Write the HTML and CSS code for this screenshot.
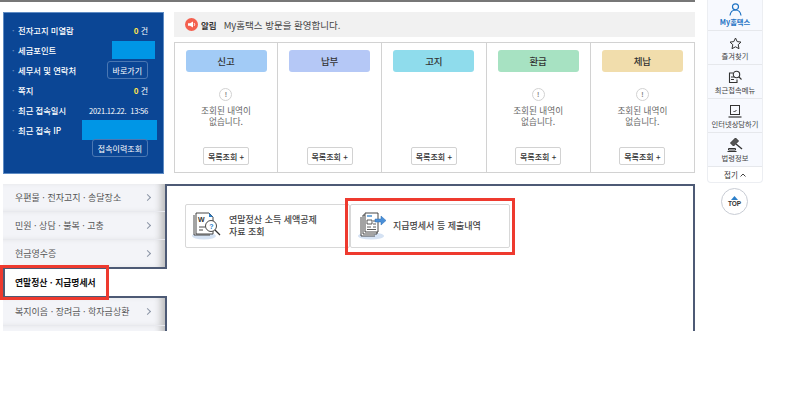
FILE: index.html
```html
<!DOCTYPE html>
<html lang="ko">
<head>
<meta charset="utf-8">
<title>My홈택스</title>
<link rel="stylesheet" href="styles.css">
</head>
<body>
<div class="page">
  <div class="main">
    <div class="topline"></div>
    <div class="top">
      <section class="info">
        <div class="info-row"><span class="lab">전자고지 미열람</span><span class="val"><b>0</b> 건</span></div>
        <div class="info-row"><span class="lab">세금포인트</span><span class="mask m1"></span></div>
        <div class="info-row"><span class="lab">세무서 및 연락처</span><span class="dbtn">바로가기</span></div>
        <div class="info-row"><span class="lab">쪽지</span><span class="val"><b>0</b> 건</span></div>
        <div class="info-row"><span class="lab">최근 접속일시</span><span class="date">2021.12.22.&nbsp; 13:56</span></div>
        <div class="info-row"><span class="lab">최근 접속 IP</span><span class="mask m2"></span></div>
        <div class="info-last"><span class="dbtn">접속이력조회</span></div>
      </section>
      <div class="right">
        <div class="notice">
          <svg class="spk" width="13" height="13" viewBox="0 0 13 13"><circle cx="6.500" cy="6.500" r="6.500" fill="#f4604f"/><path d="M3 5.200h2L8 3.600v5.800L5 7.800H3z" fill="#fff"/><path d="M9.200 5.200q1 1.300 0 2.600" stroke="#fff" fill="none"/></svg>
          <b>알림</b><span>My홈택스 방문을 환영합니다.</span>
        </div>
        <div class="cols">
          <div class="col"><div class="chip c1">신고</div><div class="empty"><i>!</i><p>조회된 내역이<br>없습니다.</p></div><span class="more">목록조회 +</span></div>
          <div class="col"><div class="chip c2">납부</div><div class="empty"></div><span class="more">목록조회 +</span></div>
          <div class="col"><div class="chip c3">고지</div><div class="empty"></div><span class="more">목록조회 +</span></div>
          <div class="col"><div class="chip c4">환급</div><div class="empty"><i>!</i><p>조회된 내역이<br>없습니다.</p></div><span class="more">목록조회 +</span></div>
          <div class="col"><div class="chip c5">체납</div><div class="empty"><i>!</i><p>조회된 내역이<br>없습니다.</p></div><span class="more">목록조회 +</span></div>
        </div>
      </div>
    </div>
    <div class="bottom">
      <nav class="menu">
        <a class="mi">우편물 · 전자고지 · 송달장소<em></em></a>
        <a class="mi">민원 · 상담 · 불복 · 고충<em></em></a>
        <a class="mi mi-c">현금영수증<em></em></a>
        <a class="mi-on">연말정산 · 지급명세서<span class="red red-tab"></span></a>
        <a class="mi mi-n">복지이음 · 장려금 · 학자금상환<em></em></a>
        <a class="mi"></a>
      </nav>
      <div class="panel">
        <div class="cards">
          <div class="card c-a">
            <svg class="cico" width="30" height="28" viewBox="0 0 30 28"><ellipse cx="12" cy="24" rx="12" ry="3.500" fill="#d5e2f3"/><path d="M2 3v20h16" fill="#fff" stroke="#333" stroke-width=".9"/><path d="M4 1h13l4 4v17H4z" fill="#fff" stroke="#333" stroke-width=".9"/><path d="M17 1l4 4h-4z" fill="#2c7fc9"/><text x="6" y="10" font-size="7" font-weight="700" fill="#333" font-family="Liberation Sans">W</text><path d="M7 15h6M7 18h4" stroke="#333" stroke-width=".9"/><circle cx="19" cy="14" r="5.500" fill="#fff" stroke="#333" stroke-width=".9"/><text x="17.300" y="17" font-size="7" font-weight="700" fill="#2c7fc9" font-family="Liberation Sans">?</text><path d="M23 18l5 5" stroke="#333" stroke-width="1.300"/></svg>
            <span>연말정산 소득 세액공제<br>자료 조회</span>
          </div>
          <div class="card c-b">
            <svg class="cico" width="29" height="28" viewBox="0 0 29 28"><ellipse cx="13" cy="24" rx="13" ry="3.500" fill="#d5e2f3"/><path d="M3 5v19h14" fill="#fff" stroke="#333" stroke-width=".9"/><path d="M5 3v19h14V3z" fill="#fff" stroke="#333" stroke-width=".9"/><path d="M7 1h13v19H7z" fill="#fff" stroke="#333" stroke-width=".9"/><path d="M9 4h5" stroke="#2c7fc9" stroke-width="1.300"/><path d="M9 8h5v4H9zM9 15h4M15 9h3M15 12h3M15 15h3M9 17.500h9" stroke="#333" stroke-width=".8" fill="none"/><path d="M17 7h6V4l5 4.500-5 4.500v-3h-6z" fill="#4a90d9" stroke="#2c6cb0" stroke-width=".5"/></svg>
            <span>지급명세서 등 제출내역</span>
          </div>
          <span class="red red-card"></span>
        </div>
      </div>
    </div>
  </div>
  <aside class="rail">
    <div class="rail-box">
      <a class="ri ri-on"><svg width="13" height="13" viewBox="0 0 13 13" fill="none" stroke="#1f73c4" stroke-width="1.200"><circle cx="6.500" cy="3.800" r="3"/><path d="M1 12.500q.7-5.500 5.500-5.500t5.500 5.500"/></svg><span>My홈택스</span></a>
      <a class="ri"><svg width="13" height="13" viewBox="0 0 13 13" fill="none" stroke="#333" stroke-width="1"><path d="M6.500 1l1.700 3.600 3.800.5-2.800 2.600.8 4-3.500-1.900-3.500 1.900.8-4L1 5.100l3.800-.5z"/></svg><span>즐겨찾기</span></a>
      <a class="ri"><svg width="14" height="14" viewBox="0 0 14 14" fill="none" stroke="#333" stroke-width="1.100"><path d="M5 3H1.500v9.500H9v-3"/><path d="M3 7h3.500M3 9.500h3" stroke-width="1"/><circle cx="8.500" cy="4.500" r="3.200"/><path d="M11 7l2.500 2.500"/></svg><span>최근접속메뉴</span></a>
      <a class="ri"><svg width="14" height="13" viewBox="0 0 14 13" fill="none" stroke="#333"><rect x="2.500" y=".5" width="9" height="9"/><path d="M.5 12h13" stroke-width="1.200"/><path d="M5.500 6l1 1 2-2"/></svg><span>인터넷상담하기</span></a>
      <a class="ri"><svg width="16" height="15" viewBox="0 0 16 15" fill="none" stroke="#333"><path d="M3.500 6L8.500 1l3 3-5 5z" fill="#555"/><path d="M9 7l6 5" stroke-width="1.300"/><path d="M1.500 11.500h7v1.500h-7zM.5 14.500h9"/></svg><span>법령정보</span></a>
      <a class="ri-fold">접기 <svg width="6" height="4" viewBox="0 0 6 4" fill="none" stroke="#444"><path d="M.5 3.500L3 1l2.500 2.500"/></svg></a>
    </div>
    <a class="top-btn"><svg width="7" height="4" viewBox="0 0 7 4"><path d="M3.500 0L7 4H0z" fill="#2c7fc9"/></svg><span>TOP</span></a>
  </aside>
</div>
</body>
</html>
```

FILE: styles.css
```css
* { box-sizing: border-box; }
html, body { margin: 0; padding: 0; background: #fff; }
body { font-family: "Noto Sans CJK KR", "Noto Sans", sans-serif; color: #333; }
.page { width: 787px; height: 331px; overflow: hidden; display: flex; align-items: flex-start; padding-left: 3px; }
.main { width: 692px; flex: none; }
.topline { height: 2px; margin-left: -3px; background: #777; }
.top { display: flex; gap: 10px; margin-top: 10px; height: 162px; }

.info { width: 161px; height: 162px; background: #0b4695; border: 1px solid #5f8cc4; padding: 7px 15px 0 11px; color: #fff; font-size: 8.300px; }
.info-row { display: flex; justify-content: space-between; align-items: center; height: 20px; font-weight: 500; }
.lab { position: relative; padding-left: 3px; }
.lab::before { content: "·"; position: absolute; left: -3px; opacity: .4; }
.val { font-weight: 400; font-size: 8px; }
.val b { color: #ffe44d; }
.mask { background: #0096e6; display: block; }
.m1 { width: 43px; height: 18px; margin-right: -7px; }
.m2 { width: 75px; height: 20px; margin-right: -9px; }
.date { font-size: 7.500px; font-weight: 400; letter-spacing: -.2px; }
.dbtn { border: 1px solid #4a77b3; border-radius: 3px; height: 18px; padding: 0 5px; display: inline-flex; align-items: center; font-size: 8px; font-weight: 400; }
.info-last { display: flex; justify-content: flex-end; margin-top: -1px; }

.right { width: 521px; }
.notice { height: 25px; background: #f1f1f1; display: flex; align-items: center; padding-left: 11px; font-size: 9.500px; color: #444; }
.notice .spk { margin-right: 3px; }
.notice b { margin-right: 7px; color: #333; font-size: 8.500px; }
.cols { display: flex; height: 131px; margin-top: 5px; border: 1px solid #d2d2d2; }
.col { flex: 1 1 0; border-left: 1px solid #d2d2d2; padding: 7px 0; display: flex; flex-direction: column; align-items: center; }
.col:first-child { border-left: 0; flex: 0 0 102px; }
.chip { width: 81px; height: 22px; border-radius: 3px; display: flex; align-items: center; justify-content: center; font-size: 9.500px; font-weight: 500; color: #333; }
.c1 { background: #a2cbf6; }
.c2 { background: #b5c8f6; }
.c3 { background: #8fdcec; }
.c4 { background: #a7e2c2; }
.c5 { background: #f1ddac; }
.empty { flex: 1; padding-top: 16px; text-align: center; font-size: 8.600px; line-height: 11px; color: #666; }
.empty i { display: block; width: 13px; height: 13px; margin: 0 auto 4px; border: 1px solid #d2d2d2; border-radius: 50%; font: 700 7px/11px "Liberation Sans", sans-serif; color: #888; }
.empty p { margin: 0; }
.more { width: 46px; height: 18px; border: 1px solid #d2d2d2; border-radius: 2px; display: flex; align-items: center; justify-content: center; font-size: 8px; font-weight: 500; color: #333; white-space: nowrap; }

.bottom { display: flex; margin-top: 10px; height: 147px; }
.menu { width: 162px; flex: none; font-size: 9px; color: #555; }
.mi { position: relative; display: flex; align-items: center; justify-content: space-between; height: 28px; padding: 0 15px 0 12px; background: #f3f4f8; border-bottom: 1px solid #e8e9ee; box-shadow: inset -8px 0 7px -4px #bbb; }
.mi em { width: 5px; height: 5px; border-top: 1.500px solid #8b95a6; border-right: 1.500px solid #8b95a6; transform: rotate(45deg); }
.mi-c { height: 29px; border-bottom: 2px solid #4d5a75; }
.mi-on { position: relative; display: flex; align-items: center; height: 27px; background: #fff; color: #111; font-weight: 700; border-left: 2px solid #4d5a75; margin-right: -2px; z-index: 2; padding-left: 10px; font-size: 8.800px; }
.mi-n { border-top: 2px solid #4d5a75; height: 30px; }
.panel { flex: 1; border: 2px solid #4d5a75; border-bottom: 0; background: #fff; }
.cards { position: relative; display: flex; padding: 18px 0 0 18px; }
.card { height: 44px; background: #fff; border: 1px solid #d8d8d8; border-radius: 2px; display: flex; align-items: center; font-size: 9px; line-height: 12.500px; font-weight: 500; color: #444; }
.c-a { width: 165px; padding-left: 6px; }
.c-b { width: 160px; padding-left: 7px; }
.cico { flex: none; margin-right: 7px; }
.c-b .cico { margin-right: 6px; }
.red { position: absolute; border: 3px solid #ee3a2f; display: block; pointer-events: none; }
.red-tab { left: -5px; top: -4px; width: 109px; height: 35px; }
.red-card { left: 178px; top: 12px; width: 170px; height: 57px; }

.rail { margin-left: 12px; width: 56px; flex: none; }
.rail-box { background: #f7f9fe; border: 1px solid #eceef2; border-top: 0; border-radius: 0 0 4px 4px; margin-bottom: 5px; }
.ri { display: flex; flex-direction: column; align-items: center; justify-content: flex-end; height: 34px; padding-bottom: 3px; gap: 1px; font-size: 7.300px; line-height: 10px; color: #444; border-bottom: 1px solid #e6e8ec; white-space: nowrap; }
.ri-on { height: 31px; color: #1f73c4; font-weight: 700; }
.ri-fold { display: flex; align-items: center; justify-content: center; gap: 2px; height: 15px; font-size: 7.500px; background: #fff; border-radius: 0 0 4px 4px; }
.top-btn { display: flex; flex-direction: column; align-items: center; justify-content: center; width: 27px; height: 27px; margin-left: 14px; border: 1px solid #c8ccd4; border-radius: 50%; background: #fff; font: 700 6.500px/8px "Liberation Sans", sans-serif; color: #333; }
```
